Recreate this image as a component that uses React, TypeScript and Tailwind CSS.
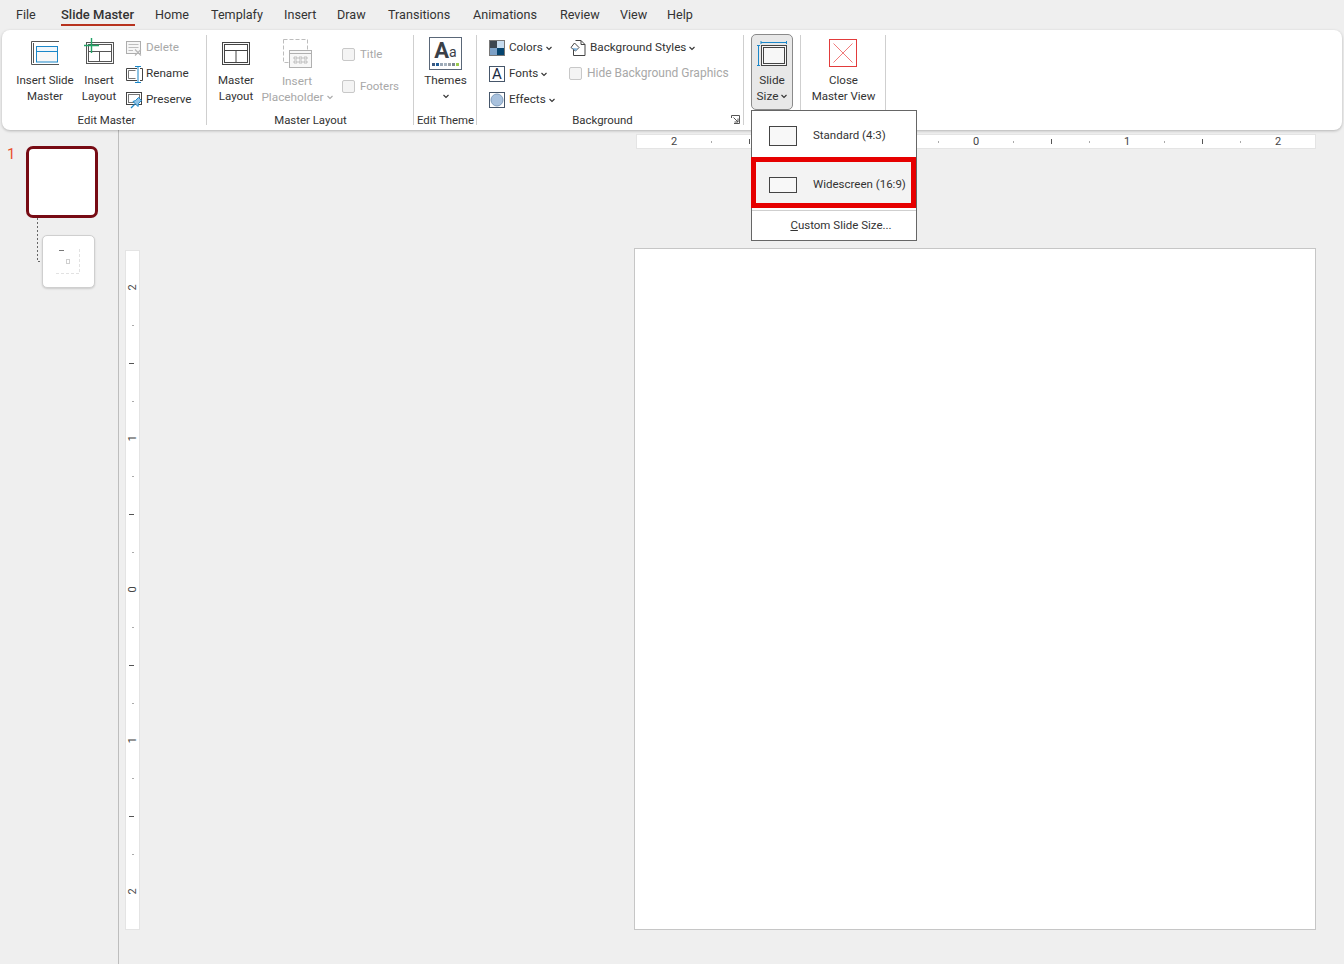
import React from "react";

const TABS: [string, string][] = [
  ["File", "w-[45px]"],
  ["Slide Master", "w-[94px]"],
  ["Home", "w-[56px]"],
  ["Templafy", "w-[73px]"],
  ["Insert", "w-[53px]"],
  ["Draw", "w-[51px]"],
  ["Transitions", "w-[85px]"],
  ["Animations", "w-[87px]"],
  ["Review", "w-[60px]"],
  ["View", "w-[47px]"],
  ["Help", "w-[40px]"],
];

function Chevron({ color = "#333" }: { color?: string }) {
  return (
    <svg width="6" height="5" viewBox="0 0 6 5" className="inline-block shrink-0">
      <path d="M0.5 1 L3 3.5 L5.5 1" fill="none" stroke={color} strokeWidth="1.1" />
    </svg>
  );
}

function Group({ width, label, children, labelClass = "" }: { width: string; label?: string; children: React.ReactNode; labelClass?: string }) {
  return (
    <div className={`${width} shrink-0 flex flex-col relative`}>
      <div className="flex-1 flex min-h-0">{children}</div>
      <div className={`h-[20px] text-[11.4px] leading-[20px] text-center text-[#333] whitespace-nowrap ${labelClass}`}>{label}</div>
      <div className="absolute right-0 top-[5px] bottom-[5px] w-px bg-[#cfcfcf]" />
    </div>
  );
}

function Large({ width, icon, lines }: { width: string; icon: React.ReactNode; lines: string[] }) {
  return (
    <div className={`${width} shrink-0 flex flex-col items-center text-[#333]`}>
      <div className="h-[42px] w-full flex items-end justify-center">{icon}</div>
      <div className="text-[11.5px] leading-[16px] text-center whitespace-nowrap">
        {lines.map((l) => (
          <div key={l}>{l}</div>
        ))}
      </div>
    </div>
  );
}

function Small({ icon, label, disabled = false, chevron = false }: { icon: React.ReactNode; label: string; disabled?: boolean; chevron?: boolean }) {
  return (
    <div className={`h-[26px] flex items-center text-[11.7px] whitespace-nowrap ${disabled ? "text-[#a8a8a8]" : "text-[#333]"}`}>
      <span className="w-[16px] h-[16px] mr-[4px] shrink-0 flex items-center justify-center">{icon}</span>
      <span>{label}</span>
      {chevron && <span className="ml-[3px] flex"><Chevron /></span>}
    </div>
  );
}

function Check({ label }: { label: string }) {
  return (
    <div className="h-[16px] flex items-center text-[11.5px] leading-[16px] text-[#a8a8a8] whitespace-nowrap">
      <span className="w-[13px] h-[13px] rounded-[2px] border border-[#c8c8c8] bg-[#f4f4f4] mr-[5px] shrink-0" />
      {label}
    </div>
  );
}

const InsertSlideMasterIcon = (
  <svg width="29" height="26" viewBox="0 0 29 26">
    <path d="M28 1.5H0.5V24.5H28" fill="none" stroke="#555" strokeWidth="1" />
    <path d="M2.5 3V23" fill="none" stroke="#555" strokeWidth="1" />
    <rect x="5.5" y="6.5" width="21" height="15.5" fill="#f8f8f8" stroke="#1b87c9" strokeWidth="1" />
    <rect x="5.5" y="6.5" width="21" height="5" fill="#f0f7fc" stroke="#1b87c9" strokeWidth="1" />
  </svg>
);
const InsertLayoutIcon = (
  <svg width="31" height="28" viewBox="0 0 31 28">
    <rect x="2.5" y="5.5" width="27" height="21" fill="#fafafa" stroke="#555" strokeWidth="1" />
    <rect x="4.5" y="7.5" width="23" height="17" fill="#fff" stroke="#555" strokeWidth="1" />
    <path d="M4.5 14.5H27.5M15.5 14.5V24.5" stroke="#555" strokeWidth="1" fill="none" />
    <path d="M0 8.5H15M7.5 1V16" stroke="#21a366" strokeWidth="1.4" fill="none" />
  </svg>
);
const MasterLayoutIcon = (
  <svg width="28" height="23" viewBox="0 0 28 23">
    <rect x="0.5" y="0.5" width="27" height="22" fill="#fafafa" stroke="#444" strokeWidth="1" />
    <rect x="2.5" y="2.5" width="23" height="18" fill="#fff" stroke="#444" strokeWidth="1" />
    <path d="M2.5 8.5H25.5M14 8.5V20.5" stroke="#444" strokeWidth="1" fill="none" />
  </svg>
);
const PlaceholderIcon = (
  <svg width="29" height="29" viewBox="0 0 29 29">
    <rect x="0.5" y="0.5" width="24" height="23" fill="#fff" stroke="#bdbdbd" strokeWidth="1" strokeDasharray="4 2" />
    <rect x="6.5" y="11.5" width="22" height="17" fill="#f7f7f7" stroke="#b0b0b0" strokeWidth="1" />
    <path d="M6.5 14.5H28.5" stroke="#b0b0b0" />
    <path d="M11 18h3v2h-3zM16 18h3v2h-3zM21 18h3v2h-3zM11 22h3v2h-3zM16 22h3v2h-3zM21 22h3v2h-3z" fill="none" stroke="#b0b0b0" strokeWidth="0.8" />
  </svg>
);
const DeleteIcon = (
  <svg width="16" height="16" viewBox="0 0 16 16">
    <rect x="0.5" y="1.5" width="14" height="12" fill="#f6f6f6" stroke="#adadad" />
    <path d="M2.5 4.5H12.5M2.5 7.5H12.5M2.5 10.5H7" stroke="#bdbdbd" fill="none" />
    <path d="M9 9.5L15 15.5M15 9.5L9 15.5" stroke="#b5b5b5" strokeWidth="1.1" fill="none" />
  </svg>
);
const RenameIcon = (
  <svg width="17" height="17" viewBox="0 0 17 17" className="shrink-0">
    <path d="M11 2.5H0.5V14.5H11" fill="#fff" stroke="#444" />
    <path d="M9.5 4.5H2.5V12.5H9.5" fill="none" stroke="#777" />
    <path d="M14 2.5H16.5V14.5H14" fill="none" stroke="#444" />
    <path d="M9 0.5H15M12 0.5V16.5M9 16.5H15" fill="none" stroke="#1b87c9" strokeWidth="1" />
  </svg>
);
const PreserveIcon = (
  <svg width="17" height="17" viewBox="0 0 17 17" className="shrink-0">
    <rect x="0.5" y="0.5" width="15" height="12" fill="#fff" stroke="#444" />
    <rect x="2.5" y="2.5" width="11" height="8" fill="#fff" stroke="#777" />
    <path d="M5 16L8.5 12.5" stroke="#1b87c9" strokeWidth="1.2" fill="none" />
    <path d="M7 9.5L12 14.5L12.5 11.5L15.5 8.5L12.5 5.5L9.5 8.5Z" fill="#8fc3e6" stroke="#1b87c9" />
  </svg>
);
const ColorsIcon = (
  <svg width="16" height="16" viewBox="0 0 16 16">
    <rect x="0" y="0" width="16" height="16" fill="#777" />
    <rect x="1" y="1" width="7" height="7" fill="#3c4650" />
    <rect x="8" y="1" width="7" height="7" fill="#c6dbee" />
    <rect x="1" y="8" width="7" height="7" fill="#7da1c7" />
    <rect x="8" y="8" width="7" height="7" fill="#05446f" />
  </svg>
);
const FontsIcon = (
  <span className="w-[16px] h-[16px] border border-[#46566a] bg-white flex items-center justify-center text-[15px] leading-none text-[#1b2a44]">A</span>
);
const EffectsIcon = (
  <svg width="16" height="16" viewBox="0 0 16 16">
    <rect x="0.5" y="0.5" width="15" height="15" fill="#fff" stroke="#46566a" />
    <circle cx="8" cy="8" r="6" fill="#a9c2de" stroke="#7f9dbd" />
  </svg>
);
const BgStylesIcon = (
  <svg width="16" height="16" viewBox="0 0 16 16">
    <path d="M5.5 0.5H11L15 4.5V15.5H3.5V10" fill="#fff" stroke="#444" />
    <path d="M11 0.5V4.5H15" fill="none" stroke="#444" />
    <path d="M4.5 3L9 7.5L5.5 11L1 7.5Z" fill="#fff" stroke="#444" />
    <path d="M2 8L5.5 11L8 8.5Z" fill="#7fb2dc" />
  </svg>
);
const SlideSizeIcon = (
  <svg width="30" height="26" viewBox="0 0 30 26">
    <path d="M4 1.5H29.5M4 0V3M29.5 0V3" stroke="#1b87c9" fill="none" />
    <path d="M0 4.5H3M1.5 4.5V24.5M0 24.5H3" stroke="#1b87c9" fill="none" />
    <rect x="4.5" y="4.5" width="25" height="20" fill="#f7f7f7" stroke="#444" />
    <rect x="6.5" y="6.5" width="21" height="16" fill="#f7f7f7" stroke="#444" />
  </svg>
);
const CloseIcon = (
  <svg width="28" height="28" viewBox="0 0 28 28">
    <rect x="0.5" y="0.5" width="27" height="27" fill="#fff" stroke="#e23b3b" />
    <path d="M4.5 4.5L23.5 23.5M23.5 4.5L4.5 23.5" stroke="#f07b7b" strokeWidth="1" fill="none" />
  </svg>
);

function ThemesIcon() {
  const dots = ["#3d5a80", "#1f5d99", "#9aa7b5", "#a7b4c0", "#9aa0a6", "#7d8791", "#9bcb4c"];
  return (
    <div className="w-[33px] h-[33px] border border-[#5a6778] bg-white flex flex-col items-center">
      <div className="h-[22px] flex items-end text-[#3a4048] leading-none mt-[1px]">
        <span className="text-[22px] font-bold leading-[21px]">A</span>
        <span className="text-[14px] leading-[18px]">a</span>
      </div>
      <div className="flex gap-[1px] mt-[2px]">
        {dots.map((c, i) => (
          <svg key={i} width="3" height="3" viewBox="0 0 3 3"><rect width="3" height="3" fill={c} /></svg>
        ))}
      </div>
    </div>
  );
}

function HRuler() {
  const marks = ["2", "s", "m", "s", "", "s", "m", "s", "0", "s", "m", "s", "1", "s", "m", "s", "2"];
  return (
    <div className="w-[680px] h-[15px] bg-white border border-[#e4e4e4] flex justify-center items-center shrink-0">
      <div className="w-[604px] flex justify-between items-center">
        {marks.map((m, i) => (
          <div key={i} className="w-0 flex justify-center items-center">
            {m === "s" ? <span className="w-px h-[2px] bg-[#aaa] shrink-0" /> : m === "m" ? <span className="w-px h-[5px] bg-[#555] shrink-0" /> : <span className="text-[11px] leading-[13px] text-[#444]">{m}</span>}
          </div>
        ))}
      </div>
    </div>
  );
}

function VRuler() {
  const marks = ["2", "s", "m", "s", "1", "s", "m", "s", "0", "s", "m", "s", "1", "s", "m", "s", "2"];
  return (
    <div className="w-[15px] h-[680px] mt-[120px] bg-white border border-[#e4e4e4] flex flex-col justify-center items-center shrink-0">
      <div className="h-[604px] flex flex-col justify-between items-center">
        {marks.map((m, i) => (
          <div key={i} className="h-0 flex justify-center items-center">
            {m === "s" ? <span className="h-px w-[2px] bg-[#aaa] shrink-0" /> : m === "m" ? <span className="h-px w-[5px] bg-[#555] shrink-0 -translate-x-px" /> : <span className="text-[11px] leading-[13px] text-[#444] -rotate-90 -translate-y-px">{m}</span>}
          </div>
        ))}
      </div>
    </div>
  );
}

export default function App() {
  return (
    <div className="relative w-[1344px] h-[964px] bg-[#efefef] overflow-hidden flex flex-col font-['Roboto','Liberation_Sans',sans-serif]">
      {/* tabs */}
      <div className="h-[30px] pl-[16px] flex items-start shrink-0">
        {TABS.map(([t, w]) => (
          <div key={t} className={`${w} shrink-0 pt-[6px]`}>
            <div className={`h-[20px] leading-[18px] text-[#333] whitespace-nowrap ${t === "Slide Master" ? "text-[13px] border-b-2 border-[#b7321e] font-medium w-[74px]" : "text-[12.6px]"}`}>{t}</div>
          </div>
        ))}
      </div>

      {/* ribbon */}
      <div className="relative z-10 mx-[2px] w-[1340px] h-[100px] bg-white rounded-[8px] shadow-[0_1px_3px_rgba(0,0,0,0.25)] flex shrink-0">
        <Group width="w-[205px]" label="Edit Master" labelClass="pl-[4px]">
          <div className="flex pl-[13px]">
            <Large width="w-[60px]" icon={<span className="flex mb-[6px]">{InsertSlideMasterIcon}</span>} lines={["Insert Slide", "Master"]} />
            <Large width="w-[48px]" icon={<span className="flex mb-[7px]">{InsertLayoutIcon}</span>} lines={["Insert", "Layout"]} />
            <div className="pt-[5px] ml-[3px]">
              <Small icon={DeleteIcon} label="Delete" disabled />
              <Small icon={RenameIcon} label="Rename" />
              <Small icon={PreserveIcon} label="Preserve" />
            </div>
          </div>
        </Group>
        <Group width="w-[207px]" label="Master Layout">
          <div className="flex pl-[2px]">
            <Large width="w-[54px]" icon={<span className="flex mb-[7px]">{MasterLayoutIcon}</span>} lines={["Master", "Layout"]} />
            <div className="w-[70px] shrink-0 flex flex-col items-center text-[#a8a8a8] -ml-[1px]">
              <div className="h-[42px] flex items-end"><span className="flex mb-[4px] ml-[1px]">{PlaceholderIcon}</span></div>
              <div className="text-[11.8px] leading-[16px] text-center whitespace-nowrap pt-[1px]">
                <div>Insert</div>
                <div className="flex items-center justify-center gap-[3px]">Placeholder<Chevron color="#aaa" /></div>
              </div>
            </div>
            <div className="flex flex-col gap-[16px] pt-[16px] pl-[10px]">
              <Check label="Title" />
              <Check label="Footers" />
            </div>
          </div>
        </Group>
        <Group width="w-[63px]" label="Edit Theme">
          <div className="w-full flex flex-col items-center text-[11.8px] text-[#333]">
            <div className="h-[42px] flex items-start pt-[7px]"><ThemesIcon /></div>
            <div className="leading-[16px]">Themes</div>
            <div className="h-[16px] flex items-center"><Chevron /></div>
          </div>
        </Group>
        <Group width="w-[267px]" label="Background" labelClass="pr-[16px]">
          <div className="flex pl-[12px] pt-[5px]">
            <div className="w-[81px] shrink-0">
              <Small icon={ColorsIcon} label="Colors" chevron />
              <Small icon={FontsIcon} label="Fonts" chevron />
              <Small icon={EffectsIcon} label="Effects" chevron />
            </div>
            <div>
              <Small icon={BgStylesIcon} label="Background Styles" chevron />
              <div className="h-[26px] flex items-center text-[12px] text-[#a8a8a8] whitespace-nowrap -ml-[1px] -mt-[1px]">
                <span className="w-[13px] h-[13px] rounded-[2px] border border-[#c8c8c8] bg-[#f4f4f4] mr-[5px] shrink-0" />
                Hide Background Graphics
              </div>
            </div>
          </div>
          <svg width="9" height="9" viewBox="0 0 9 9" className="absolute right-[4px] bottom-[6px]">
            <path d="M0.5 3V0.5H8.5V8.5H3M2.5 2.5L7 7M7 3.5V7H3.5" fill="none" stroke="#555" />
          </svg>
        </Group>
        <Group width="w-[57px]">
          <div className="w-full flex justify-center pt-[4px] pr-[1px] h-[80px]">
            <div className="w-[42px] h-[76px] rounded-[5px] border border-[#8a8a8a] bg-[#e8e8e8] flex flex-col items-center text-[11.8px] text-[#333]">
              <div className="h-[37px] flex items-start pt-[6px]">{SlideSizeIcon}</div>
              <div className="leading-[16px]">Slide</div>
              <div className="leading-[16px] flex items-center gap-[3px]">Size<Chevron /></div>
            </div>
          </div>
        </Group>
        <Group width="w-[85px]">
          <Large width="w-full" icon={<span className="flex mb-[5px] mr-[1px]">{CloseIcon}</span>} lines={["Close", "Master View"]} />
        </Group>
      </div>

      {/* body */}
      <div className="flex-1 flex min-h-0">
        <div className="w-[119px] shrink-0 border-r border-[#bdbdbd] relative">
          <div className="flex pt-[16px]">
            <div className="w-[26px] pl-[7px] text-[15px] leading-[16px] text-[#e9502f]">1</div>
            <div className="w-[72px] h-[72px] rounded-[7px] border-[3px] border-[#770b14] bg-white" />
          </div>
          <div className="ml-[42px] mt-[17px] w-[53px] h-[53px] rounded-[5px] border border-[#cfcfcf] shadow-[0_1px_2px_rgba(0,0,0,0.15)] bg-white relative">
            <svg width="30" height="30" viewBox="0 0 30 30" className="absolute left-[12px] top-[12px]">
              <path d="M24.5 1V25.5H1" fill="none" stroke="#e2e2e2" strokeDasharray="3 2" />
              <path d="M4 2.5H9" stroke="#777" />
              <rect x="11.5" y="11.5" width="3" height="4" fill="none" stroke="#cfcfcf" />
            </svg>
          </div>
          <svg width="6" height="44" viewBox="0 0 6 44" className="absolute left-[37px] top-[88px]">
            <path d="M0.5 0V43.5H5" fill="none" stroke="#666" strokeDasharray="2 2" />
          </svg>
        </div>
        <div className="flex-1 flex pl-[6px]">
          <VRuler />
          <div className="flex-1 flex flex-col items-end pr-[28px] pt-[4px]">
            <HRuler />
            <div className="mt-[99px] w-[682px] h-[682px] bg-white border border-[#c6c6c6] shrink-0" />
          </div>
        </div>
      </div>

      {/* dropdown */}
      <div className="absolute z-20 left-[751px] top-[110px] w-[166px] h-[131px] bg-white border border-[#666] flex flex-col text-[11.5px] text-[#333]">
        <div className="h-[46px] flex items-center pl-[17px] pt-[4px] shrink-0">
          <span className="w-[28px] h-[20px] border border-[#444] bg-[#f8f8f8] mr-[16px]" />
          Standard (4:3)
        </div>
        <div className="h-[51px] -ml-px border-[5px] border-[#e60000] bg-[#f3f3f3] flex items-center pl-[13px] pt-[4px] w-[165px] shrink-0">
          <span className="w-[28px] h-[16px] border border-[#444] bg-[#f8f8f8] mr-[16px] shrink-0" />
          <span className="whitespace-nowrap">Widescreen (16:9)</span>
        </div>
        <div className="h-px bg-[#cfcfcf] mt-[2px] shrink-0" />
        <div className="flex-1 flex items-center justify-center pl-[14px]">
          <span><span className="underline">C</span>ustom Slide Size...</span>
        </div>
      </div>
    </div>
  );
}
